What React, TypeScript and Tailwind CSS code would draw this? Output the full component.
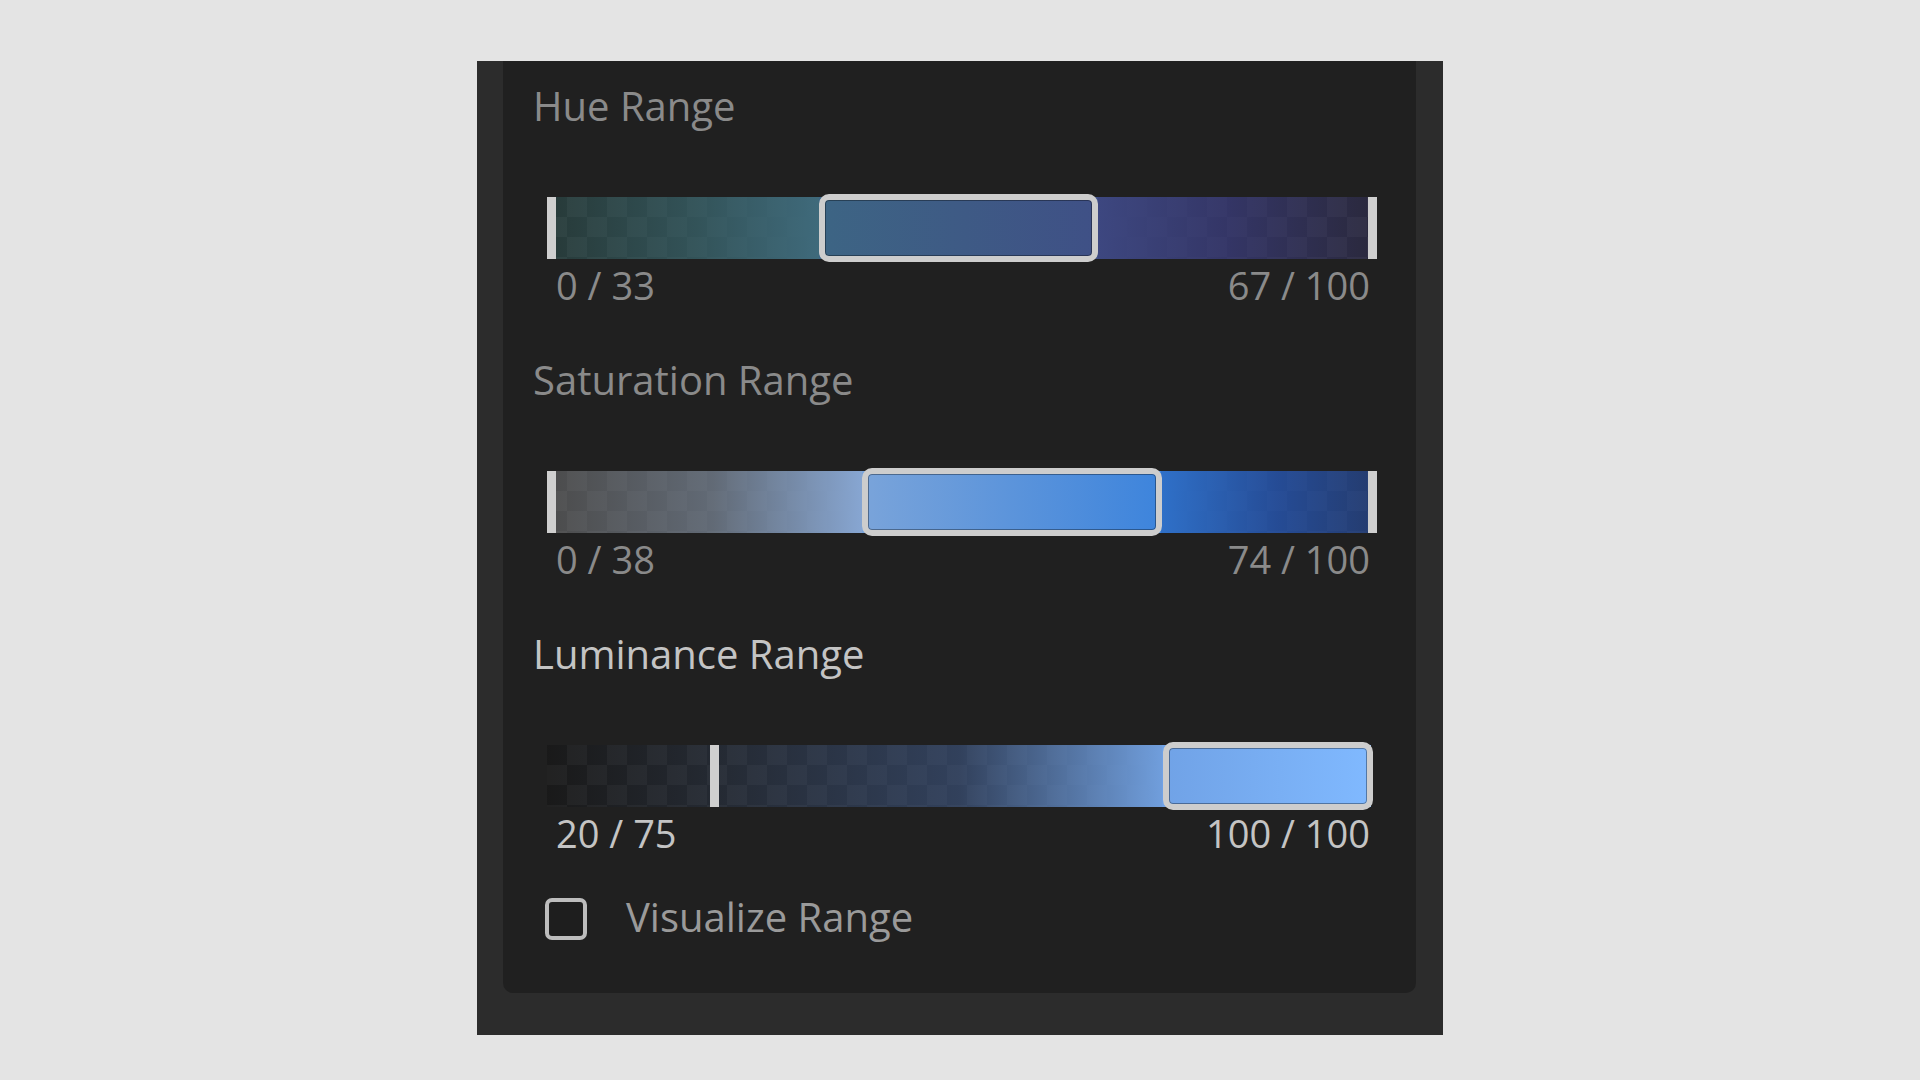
import React from 'react';

interface Range {
  title: string;
  bright?: boolean;
  lo: string;
  hi: string;
  // thumb placement on the 830px track
  thumbLeft: number;
  thumbWidth: number;
  trackWidth: number;
  markers: number[];
  gradient: string;
}

const RANGES: Range[] = [
  {
    title: 'Hue Range',
    lo: '0 / 33',
    hi: '67 / 100',
    thumbLeft: 272,
    thumbWidth: 279,
    trackWidth: 830,
    markers: [0, 821],
    gradient:
      'linear-gradient(to right, rgba(50,112,108,0.3) 0%, rgba(58,104,112,0.7) 18%, rgba(63,106,123,1) 32.8%, rgb(61,101,132) 32.8%, rgb(63,80,134) 66.4%, rgb(61,71,128) 66.4%, rgba(58,60,125,0.75) 82%, rgba(60,55,120,0.3) 100%)',
  },
  {
    title: 'Saturation Range',
    lo: '0 / 38',
    hi: '74 / 100',
    thumbLeft: 315,
    thumbWidth: 300,
    trackWidth: 830,
    markers: [0, 821],
    gradient:
      'linear-gradient(to right, rgba(125,125,125,0.45) 0%, rgba(122,134,150,0.72) 20%, rgba(135,166,210,1) 38%, rgb(122,164,218) 38%, rgb(61,132,220) 74%, rgb(47,112,200) 74%, rgba(38,86,178,0.8) 88%, rgba(38,76,160,0.6) 100%)',
  },
  {
    title: 'Luminance Range',
    bright: true,
    lo: '20 / 75',
    hi: '100 / 100',
    thumbLeft: 616,
    thumbWidth: 210,
    trackWidth: 824,
    markers: [163],
    gradient:
      'linear-gradient(to right, rgba(0,0,0,0.25) 0%, rgba(40,55,80,0.35) 20%, rgba(60,85,130,0.6) 50%, rgba(112,158,220,1) 74.6%, rgb(112,162,230) 74.6%, rgb(128,185,255) 100%)',
  },
];

function RangeSlider({ r }: { r: Range }) {
  const textColor = r.bright ? 'text-[#c4c4c4]' : 'text-[#8a8a8a]';
  return (
    <div className="flex flex-col">
      <div className={`text-[40px] leading-[40px] ${textColor}`}>{r.title}</div>

      {/* track + thumb */}
      <div className="relative mt-[68px] ml-[14px] w-[830px] h-[68px]">
        <div
          className="absolute left-0 top-[3px] bottom-[3px] bg-[repeating-conic-gradient(#2d2d2d_0%_25%,#222222_0%_50%)] bg-size-[40px_40px]"
          style={{ width: r.trackWidth }}
        >
          <div className="absolute inset-0" style={{ background: r.gradient }} />
        </div>
        {r.markers.map((m, i) => (
          <div
            key={i}
            className="absolute top-[3px] bottom-[3px] w-[9px] bg-[#cfcfcf]"
            style={{ left: m }}
          />
        ))}
        <div
          className="absolute top-0 bottom-0 rounded-[10px] border-[6px] border-[#cdcdcd] shadow-[inset_0_0_0_1px_rgba(0,0,0,0.35)]"
          style={{ left: r.thumbLeft, width: r.thumbWidth }}
        />
      </div>

      <div
        className={`mt-[5px] ml-[14px] w-[830px] flex justify-between pl-[9px] pr-[7px] text-[38px] leading-[37px] ${textColor}`}
      >
        <span>{r.lo}</span>
        <span>{r.hi}</span>
      </div>
    </div>
  );
}

export default function App() {
  return (
    <div className="min-h-screen bg-[#e4e4e4] pl-[477px] pt-[61px] font-['Open_Sans',sans-serif]">
      <div className="w-[966px] h-[974px] bg-[#2c2c2c] pl-[26px] pr-[27px]">
        <div className="h-[932px] bg-[#202020] rounded-b-[10px] pt-[25px] pl-[30px]">
          <div className="flex flex-col gap-[56px]">
            {RANGES.map((r) => (
              <RangeSlider key={r.title} r={r} />
            ))}
          </div>

          <label className="mt-[46px] ml-[12px] flex items-center gap-[39px]">
            <span className="w-[42px] h-[42px] rounded-[7px] border-[4px] border-[#bdbdbd] bg-[#1e1e1e]" />
            <span className="text-[40px] leading-[40px] text-[#9a9a9a] -mt-[4px]">Visualize Range</span>
          </label>
        </div>
      </div>
    </div>
  );
}
